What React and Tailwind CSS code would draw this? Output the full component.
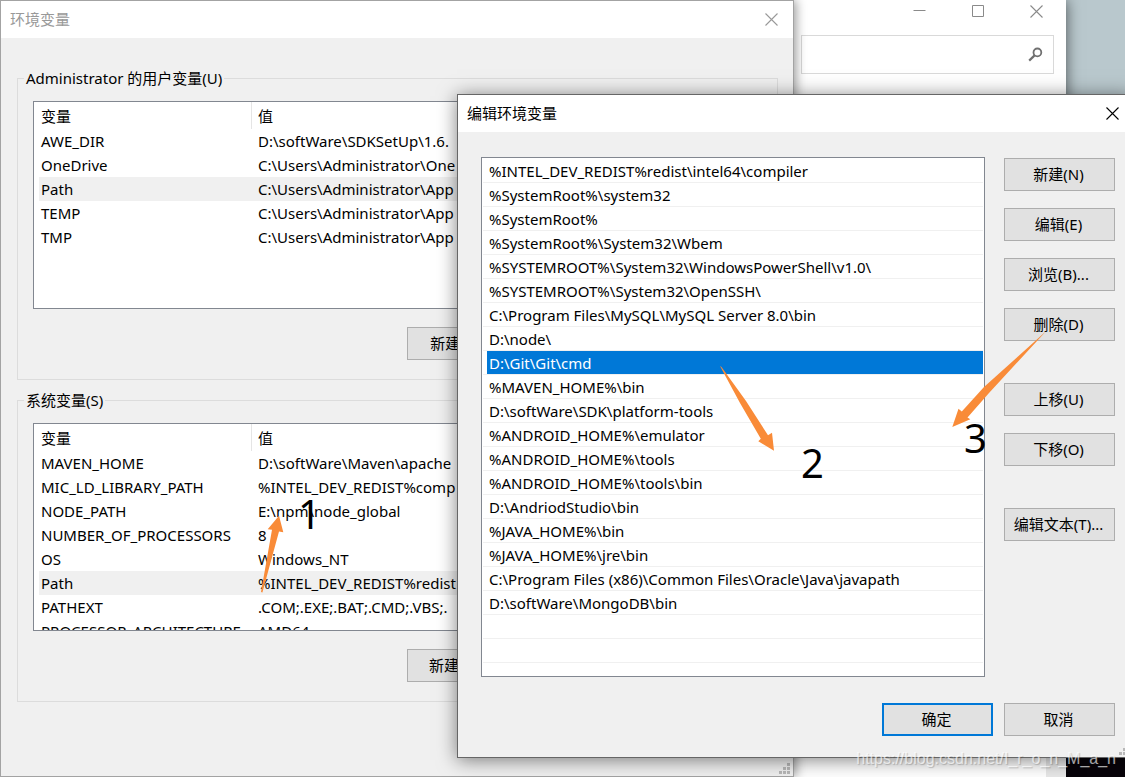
import React, { useState } from "react";

const userVars = [
  { name: "AWE_DIR", value: "D:\\softWare\\SDKSetUp\\1.6." },
  { name: "OneDrive", value: "C:\\Users\\Administrator\\One" },
  { name: "Path", value: "C:\\Users\\Administrator\\App" },
  { name: "TEMP", value: "C:\\Users\\Administrator\\App" },
  { name: "TMP", value: "C:\\Users\\Administrator\\App" },
];

const systemVars = [
  { name: "MAVEN_HOME", value: "D:\\softWare\\Maven\\apache" },
  { name: "MIC_LD_LIBRARY_PATH", value: "%INTEL_DEV_REDIST%comp" },
  { name: "NODE_PATH", value: "E:\\npm\\node_global" },
  { name: "NUMBER_OF_PROCESSORS", value: "8" },
  { name: "OS", value: "Windows_NT" },
  { name: "Path", value: "%INTEL_DEV_REDIST%redist" },
  { name: "PATHEXT", value: ".COM;.EXE;.BAT;.CMD;.VBS;." },
  { name: "PROCESSOR_ARCHITECTURE", value: "AMD64" },
];

const paths = [
  "%INTEL_DEV_REDIST%redist\\intel64\\compiler",
  "%SystemRoot%\\system32",
  "%SystemRoot%",
  "%SystemRoot%\\System32\\Wbem",
  "%SYSTEMROOT%\\System32\\WindowsPowerShell\\v1.0\\",
  "%SYSTEMROOT%\\System32\\OpenSSH\\",
  "C:\\Program Files\\MySQL\\MySQL Server 8.0\\bin",
  "D:\\node\\",
  "D:\\Git\\Git\\cmd",
  "%MAVEN_HOME%\\bin",
  "D:\\softWare\\SDK\\platform-tools",
  "%ANDROID_HOME%\\emulator",
  "%ANDROID_HOME%\\tools",
  "%ANDROID_HOME%\\tools\\bin",
  "D:\\AndriodStudio\\bin",
  "%JAVA_HOME%\\bin",
  "%JAVA_HOME%\\jre\\bin",
  "C:\\Program Files (x86)\\Common Files\\Oracle\\Java\\javapath",
  "D:\\softWare\\MongoDB\\bin",
  "",
  "",
];

function CloseIcon() {
  return (
    <svg width="13" height="13" viewBox="0 0 13 13" fill="none" stroke="currentColor" strokeWidth="1.1">
      <path d="M0.5 0.5l12 12M12.5 0.5l-12 12" />
    </svg>
  );
}

function Grip() {
  return (
    <svg className="absolute right-[3px] bottom-0.5" width="11" height="11" viewBox="0 0 11 11" fill="#b8b8b8">
      <path d="M8 0h3v3H8zM4 4h3v3H4zM8 4h3v3H8zM0 8h3v3H0zM4 8h3v3H4zM8 8h3v3H8z" />
    </svg>
  );
}

function WinButton({ children, primary, onClick }) {
  return (
    <button
      onClick={onClick}
      className={`h-[33px] w-[111px] shrink-0 bg-[#e1e1e1] pr-0.5 pb-0.5 text-center leading-5 whitespace-nowrap ${
        primary ? "border-2 border-[#0078d7]" : "border border-[#adadad]"
      }`}
    >
      {children}
    </button>
  );
}

function VariableGroup({ title, rows, buttons }) {
  const [selected, setSelected] = useState("Path");
  return (
    <fieldset className="min-w-0 border border-[#dcdcdc] pb-[19px]">
      <legend className="ml-1.5 px-0.5 leading-5">{title}</legend>
      <div className="mx-[15px] mt-[13px] h-[208px] overflow-hidden border border-[#828790] bg-white pl-[5px]">
        <table className="w-full table-fixed text-left leading-6">
          <thead>
            <tr className="h-[27px]">
              <th className="w-[213px] px-0.5 font-normal shadow-[inset_-1px_0_#e5e5e5]">变量</th>
              <th className="pl-1.5 font-normal">值</th>
            </tr>
          </thead>
          <tbody>
            {rows.map((row) => (
              <tr
                key={row.name}
                onClick={() => setSelected(row.name)}
                className={`h-6 whitespace-nowrap ${row.name === selected ? "bg-[#f0f0f0]" : ""}`}
              >
                <td className="px-0.5">{row.name}</td>
                <td className="pl-1.5">{row.value}</td>
              </tr>
            ))}
          </tbody>
        </table>
      </div>
      <div className="mx-[15px] mt-[18px] flex justify-end gap-[11px]">
        {buttons.map((label) => (
          <WinButton key={label}>{label}</WinButton>
        ))}
      </div>
    </fieldset>
  );
}

function SystemWindow() {
  return (
    <div className="absolute top-0 right-[59px] left-[700px] flex h-full flex-col bg-white shadow-[0_0_14px_rgba(0,0,0,0.6)]">
      <div className="flex h-[35px] items-start justify-end gap-[46px] pt-[5px] pr-[23px] text-[#8a8a8a]">
        <button aria-label="最小化" className="h-3">
          <svg width="13" height="13" viewBox="0 0 13 13" stroke="currentColor">
            <path d="M0.5 5.5h12" />
          </svg>
        </button>
        <button aria-label="最大化" className="h-3">
          <svg width="12" height="12" viewBox="0 0 12 12" fill="none" stroke="currentColor">
            <path d="M0.5 0.5h11v11H0.5z" />
          </svg>
        </button>
        <button aria-label="关闭" className="h-3">
          <CloseIcon />
        </button>
      </div>
      <div className="mr-3 ml-[101px] flex h-[39px] items-center border border-[#d9d9d9] pr-2.5">
        <input type="text" aria-label="搜索" className="min-w-0 flex-1 px-2 outline-none" />
        <svg width="15" height="15" viewBox="0 0 15 15" fill="none" stroke="#707070">
          <circle cx="9.4" cy="5.4" r="3.9" strokeWidth="1.8" />
          <path d="M6.6 8.4L1.2 13.6" strokeWidth="2.2" />
        </svg>
      </div>
      <div className="mt-auto ml-auto h-10 w-5 bg-[#e8e8e8]" />
    </div>
  );
}

function VariablesWindow() {
  return (
    <div className="absolute top-0 left-0 flex h-full w-[794px] flex-col border border-[#a3a3a3] bg-[#f0f0f0] shadow-[2px_0_10px_rgba(0,0,0,0.4)]">
      <header className="flex h-[37px] shrink-0 items-center justify-between bg-white pr-[15px] pl-[9px] text-[#999999]">
        <h1 className="pb-0.5">环境变量</h1>
        <button aria-label="关闭">
          <CloseIcon />
        </button>
      </header>
      <div className="flex flex-col gap-2.5 pt-[30px] pr-[15px] pl-4">
        <VariableGroup
          title="Administrator 的用户变量(U)"
          rows={userVars}
          buttons={["新建(N)...", "编辑(E)...", "删除(D)"]}
        />
        <VariableGroup
          title="系统变量(S)"
          rows={systemVars}
          buttons={["新建(W)...", "编辑(I)...", "删除(L)"]}
        />
      </div>
      <Grip />
    </div>
  );
}

function EditDialog() {
  const [selected, setSelected] = useState(8);
  return (
    <div
      role="dialog"
      aria-label="编辑环境变量"
      className="absolute top-[94px] -right-[9px] left-[457px] border border-[#666666] bg-[#f0f0f0] shadow-[0_2px_18px_rgba(0,0,0,0.5)]"
    >
      <header className="flex h-[37px] items-center justify-between bg-white pr-[14px] pl-[9px]">
        <h2 className="pb-0.5">编辑环境变量</h2>
        <button aria-label="关闭">
          <CloseIcon />
        </button>
      </header>
      <div className="pt-[25px] pr-[18px] pb-[21px] pl-[23px]">
        <div className="flex gap-[19px]">
          <ul role="listbox" className="min-w-0 flex-1 border border-[#828790] bg-white px-px pt-px pb-[13px]">
            {paths.map((path, i) => (
              <li
                key={i}
                role="option"
                aria-selected={i === selected}
                onClick={() => path && setSelected(i)}
                className="h-6 border-b border-[#f0f0f0] pl-1"
              >
                <div className={`h-[23px] px-0.5 leading-6 whitespace-nowrap ${i === selected ? "bg-[#0078d7] text-white" : ""}`}>
                  {path}
                </div>
              </li>
            ))}
          </ul>
          <div className="flex flex-col gap-[17px] pt-px">
            <WinButton>新建(N)</WinButton>
            <WinButton>编辑(E)</WinButton>
            <WinButton>浏览(B)...</WinButton>
            <WinButton>删除(D)</WinButton>
            <div className="mt-[25px] flex flex-col gap-[17px]">
              <WinButton>上移(U)</WinButton>
              <WinButton>下移(O)</WinButton>
            </div>
            <div className="mt-[25px]">
              <WinButton>编辑文本(T)...</WinButton>
            </div>
          </div>
        </div>
        <div className="mt-[26px] flex justify-end gap-[11px]">
          <WinButton primary>确定</WinButton>
          <WinButton>取消</WinButton>
        </div>
      </div>
      <Grip />
    </div>
  );
}

// numbered steps drawn over the windows
function Annotations() {
  return (
    <div className="pointer-events-none absolute inset-0 text-[40px] leading-10">
      <svg className="absolute top-0 left-0" width="1125" height="777" viewBox="0 0 1125 777" fill="#f98b38">
        <path d="M261 592L272 529.7L267.7 529.3L279 515.7L283.3 532.3L279 531.5L262.4 592.5z" />
        <path d="M720 366L721.5 367L746 401L768 435.3L772 432.7L774 450.7L758.3 441.2L760.8 438.7L740 403z" />
        <path d="M1046 331.3L984 387L961.8 411.5L958.5 408.7L952.3 427L970.3 419.3L967.5 417.6L989 393z" />
      </svg>
      <span className="absolute top-[494px] left-[298px]">1</span>
      <span className="absolute top-[443px] left-[801px]">2</span>
      <span className="absolute top-[418px] left-[964px]">3</span>
    </div>
  );
}

export default function App() {
  return (
    <div className="relative h-screen overflow-hidden bg-[#b9c8cd] font-['Noto_Sans','Noto_Sans_CJK_SC',sans-serif] text-[15px] leading-5 text-black">
      <div className="absolute right-0 bottom-0 h-10 w-[59px] bg-[#08040a]" />
      <SystemWindow />
      <VariablesWindow />
      <EditDialog />
      <Annotations />
      <div className="absolute right-[9px] bottom-2 font-['Liberation_Sans',Arial,sans-serif] text-base leading-5 text-white/65 [text-shadow:1px_1px_1px_rgba(0,0,0,0.2)]">
        https://blog.csdn.net/I_r_o_n_M_a_n
      </div>
    </div>
  );
}
